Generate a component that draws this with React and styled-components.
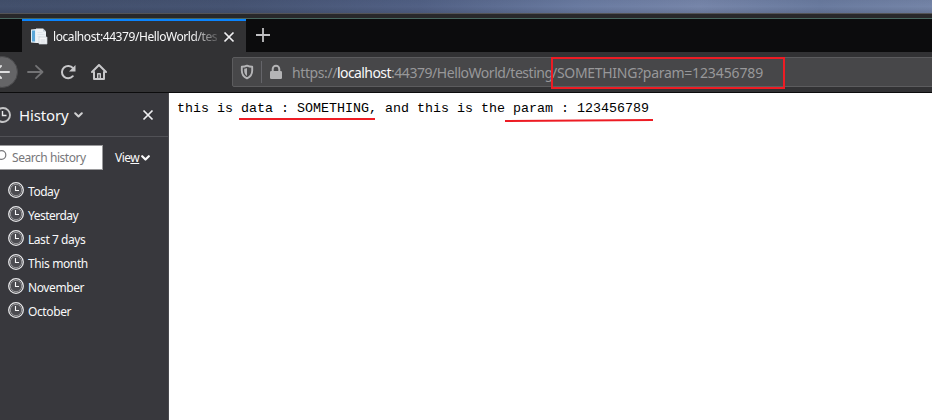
import React from "react";
import styled, { createGlobalStyle } from "styled-components";

const Global = createGlobalStyle`
  * { box-sizing: border-box; }
  body { margin: 0; overflow: hidden; background: #fff; font-family: "Noto Sans", "Open Sans", sans-serif; }
`;

const Window = styled.div`
  position: relative;
  display: flex;
  flex-direction: column;
  width: 932px;
  height: 420px;
  overflow: hidden;
`;
const Desktop = styled.div`
  flex: none;
  height: 13px;
  background:
    linear-gradient(180deg, rgba(20, 30, 50, 0.06), transparent 50%, rgba(20, 25, 40, 0.14)),
    linear-gradient(90deg, #43506c 0%, #465473 25%, #526185 45%, #6a7ba1 62%, #7786aa 75%, #6a7b9f 88%, #7585a8 100%);
`;
const Frame = styled.div`
  flex: none;
  height: 6px;
  background: #28282a;
  border-top: 1px solid #545456;
  border-bottom: 1px solid #48675f;
`;
const TabStrip = styled.div`
  flex: none;
  display: flex;
  height: 33px;
  padding-left: 22px;
  background: #0c0c0d;
`;
const Tab = styled.div`
  display: flex;
  align-items: center;
  width: 224px;
  border-top: 2px solid #0a84ff;
  padding: 0 11px 0 9px;
  background: #323234;
`;
const TabTitle = styled.div`
  flex: 1;
  margin-left: 5px;
  overflow: hidden;
  white-space: nowrap;
  font-size: 12px;
  line-height: 20px;
  letter-spacing: -0.42px;
  color: #f9f9fa;
  mask-image: linear-gradient(90deg, #000 138px, transparent 170px);
`;
const NewTab = styled.div`
  padding: 9px 0 0 10px;
  line-height: 0;
`;
const Toolbar = styled.div`
  flex: none;
  display: flex;
  align-items: center;
  height: 41px;
  background: #323234;
  border-bottom: 1px solid #0c0c0d;
`;
const BackButton = styled.div`
  display: flex;
  align-items: center;
  flex: none;
  width: 32px;
  height: 32px;
  margin-left: -14px;
  border-radius: 50%;
  border: 1px solid #4a4a4c;
  background: #656567;
  padding-left: 6px;
`;
const ToolIcon = styled.div`
  flex: none;
  width: 16px;
  height: 16px;
  margin-left: ${(p) => p.$gap}px;
  line-height: 0;
`;
const UrlBar = styled.div`
  display: flex;
  align-items: center;
  width: 712px;
  height: 30px;
  flex: none;
  margin-left: 125px;
  border: 1px solid #5c5c5e;
  border-radius: 2px 0 0 2px;
  background: #474749;
  line-height: 0;
  padding-left: 6px;
  & svg { flex: none; }
`;
const Divider = styled.div`
  width: 1px;
  height: 22px;
  margin: 0 6px 0 6px;
  background: #65656a;
`;
const Url = styled.div`
  display: flex;
  margin-left: 8px;
  padding-top: 2px;
  white-space: pre;
  font-size: 14px;
  line-height: 20px;
  color: #98989a;
`;
const UrlPart = styled.span`
  flex: none;
  width: ${(p) => p.$w}px;
  letter-spacing: ${(p) => p.$ls || 0}px;
  color: ${(p) => (p.$host ? "#f9f9fa" : "inherit")};
`;
const Body = styled.div`
  flex: 1;
  display: flex;
`;
const Sidebar = styled.aside`
  width: 169px;
  flex: none;
  background: #38383d;
  border-right: 1px solid #4a4a4f;
  color: #f9f9fa;
`;
const SidebarHeader = styled.div`
  display: flex;
  align-items: center;
  height: 44px;
  border-bottom: 1px solid #515156;
  margin-left: -5px;
`;
const SidebarTitle = styled.div`
  width: 51px;
  margin: 0 4px 0 8px;
  font-size: 15px;
  line-height: 22px;
  letter-spacing: -0.15px;
`;
const CloseSlot = styled.div`
  margin-left: 59px;
  line-height: 0;
`;
const SearchRow = styled.div`
  display: flex;
  align-items: center;
  height: 25px;
  margin-top: 8px;
`;
const SearchBox = styled.div`
  display: flex;
  align-items: center;
  width: 103px;
  height: 25px;
  overflow: hidden;
  border: 1px solid #9a9a9c;
  border-left: 0;
  background: #fff;
  color: #77777a;
  font-size: 12px;
  line-height: 18px;
  letter-spacing: -0.45px;
  white-space: nowrap;
  & svg { flex: none; margin: -3px 5px 0 -5px; }
`;
const View = styled.div`
  display: flex;
  align-items: center;
  margin-left: 12px;
  font-size: 12px;
  line-height: 18px;
  letter-spacing: -0.5px;
  & svg { margin-left: 2px; }
`;
const List = styled.ul`
  margin: 8px 0 0;
  padding: 0 0 0 8px;
  list-style: none;
`;
const Item = styled.li`
  display: flex;
  align-items: center;
  gap: 4px;
  height: 24px;
  font-size: 12px;
  letter-spacing: ${(p) => p.$ls}px;
  white-space: nowrap;
  & span { padding-top: 2px; }
`;
const Page = styled.pre`
  flex: 1;
  margin: 0;
  padding: 8px 8px;
  background: #fff;
  color: #000;
  font: 13.333px/15px "Liberation Mono", monospace;
`;
const Marks = styled.svg`
  position: absolute;
  left: 0;
  top: 0;
`;

const Cross = () => (
  <svg width="12" height="12" viewBox="0 0 12 12" fill="none" stroke="#f0f0f2" strokeWidth="1.7">
    <path d="M1.5 1.5l9 9M10.5 1.5l-9 9" />
  </svg>
);
const Chevron = ({ color = "#f9f9fa", w = 2 }) => (
  <svg width="9" height="8" viewBox="0 0 9 8" fill="none" stroke={color} strokeWidth={w} strokeLinecap="round" strokeLinejoin="round">
    <path d="M1.2 2.2l3.3 3.3 3.3-3.3" />
  </svg>
);
const Clock = () => (
  <svg width="16" height="16" viewBox="0 0 16 16" fill="none">
    <circle cx="8" cy="8" r="7.3" stroke="#e8e8ea" strokeWidth="1.3" />
    <circle cx="8" cy="8" r="5.7" fill="#4c4c51" stroke="#99999c" strokeWidth="1" />
    <path d="M7.5 4v4.5h3.5" stroke="#f9f9fa" strokeWidth="1.1" />
  </svg>
);
const HeaderClock = () => (
  <svg width="16" height="16" viewBox="0 0 16 16" fill="none" stroke="#c4c4c6">
    <circle cx="8" cy="8" r="7" strokeWidth="1.9" />
    <path d="M7.5 4v4.5h4" stroke="#e8e8ea" strokeWidth="1.4" />
  </svg>
);
const PageIcon = () => (
  <svg width="17" height="17" viewBox="0 0 17 17">
    <path d="M0 1.5L5 1v14l-5-.5z" fill="#e3edf4" />
    <path d="M1 2.5h3v11H1z" fill="#5aa6d8" />
    <path d="M5 .5h7l3 3V15H5z" fill="#edf1f5" />
    <path d="M12 .5v3h3z" fill="#c1ccd6" />
    <path d="M6.500 4.500h5M6.500 6.500h7M6.500 8.500h3" stroke="#dde4ea" />
    <path d="M8 9h8v7H8z" fill="#f5f6f8" stroke="#c7ced7" strokeWidth=".7" />
    <path d="M9.500 12h5M9.500 14h5" stroke="#d5dbe2" />
  </svg>
);
const Arrow = ({ flip, color, w = 2 }) => (
  <svg width="18" height="16" viewBox="0 0 18 16" fill="none" stroke={color} strokeWidth={w} strokeLinecap="round" strokeLinejoin="round">
    {flip ? <path d="M16 8H2M8 2L2 8l6 6" /> : <path d="M1 8h14.5M9 1.8L15.5 8 9 14.2" />}
  </svg>
);
const Reload = () => (
  <svg width="16" height="16" viewBox="0 0 16 16" fill="none" stroke="#c8c8ca" strokeWidth="2">
    <path d="M12.8 12.2A6.2 6.2 0 1 1 13 4.2" strokeLinecap="round" />
    <path d="M15.5 1v6.5H9z" fill="#c8c8ca" stroke="none" />
  </svg>
);
const Home = () => (
  <svg width="16" height="16" viewBox="0 0 16 16" fill="none" stroke="#c8c8ca" strokeWidth="2" strokeLinecap="round" strokeLinejoin="round">
    <path d="M1 8l7-7 7 7" />
    <path d="M3 8v7h10V8" />
    <path d="M6.7 14.5v-4.8h2.6v4.8" strokeWidth="1.4" />
  </svg>
);
const Shield = () => (
  <svg width="16" height="16" viewBox="0 0 16 16" fill="none">
    <path d="M8 1.6c1.8.8 3.6 1.1 5.2 1.1v3.8c0 4-1.900 6.400-5.200 7.900-3.300-1.500-5.200-3.900-5.200-7.900V2.700c1.600 0 3.400-.3 5.200-1.100z" stroke="#b4b4b6" strokeWidth="1.9" strokeLinejoin="round" />
    <path d="M8 4v8C6.100 10.800 5.200 9.200 5.200 6.500V4.700C6.300 4.600 7.200 4.400 8 4z" fill="#b4b4b6" />
  </svg>
);
const Lock = () => (
  <svg width="16" height="16" viewBox="0 0 16 16">
    <path d="M4.700 8V5a3.300 3.300 0 0 1 6.600 0v3" fill="none" stroke="#b4b4b6" strokeWidth="2" />
    <rect x="2" y="7" width="12" height="8" rx="1.300" fill="#b4b4b6" />
  </svg>
);

const periods = [
  ["Today", -0.45],
  ["Yesterday", -0.52],
  ["Last 7 days", -0.45],
  ["This month", -0.38],
  ["November", -0.4],
  ["October", -0.38],
];

export default function App() {
  return (
    <Window>
      <Global />
      <Desktop />
      <Frame />
      <TabStrip>
        <Tab>
          <PageIcon />
          <TabTitle>localhost:44379/HelloWorld/tes</TabTitle>
          <Cross />
        </Tab>
        <NewTab>
          <svg width="14" height="14" viewBox="0 0 14 14" stroke="#c0c0c2" strokeWidth="1.8">
            <path d="M7 0v14M0 7h14" />
          </svg>
        </NewTab>
      </TabStrip>
      <Toolbar>
        <BackButton><Arrow flip color="#dededf" /></BackButton>
        <ToolIcon $gap={9}><Arrow color="#737375" w={1.8} /></ToolIcon>
        <ToolIcon $gap={17}><Reload /></ToolIcon>
        <ToolIcon $gap={15}><Home /></ToolIcon>
        <UrlBar>
          <Shield />
          <Divider />
          <Lock />
          <Url>
            <UrlPart $w={45} $ls={-0.4}>https://</UrlPart>
            <UrlPart $w={54} $ls={-0.58} $host>localhost</UrlPart>
            <UrlPart $w={161} $ls={-0.45}>:44379/HelloWorld/testing</UrlPart>
            <UrlPart $w={140} $ls={-0.3}>/SOMETHING?param=</UrlPart>
            <UrlPart $w={72} $ls={-0.1}>123456789</UrlPart>
          </Url>
        </UrlBar>
      </Toolbar>
      <Body>
        <Sidebar>
          <SidebarHeader>
            <HeaderClock />
            <SidebarTitle>History</SidebarTitle>
            <Chevron color="#d0d0d2" />
            <CloseSlot><Cross /></CloseSlot>
          </SidebarHeader>
          <SearchRow>
            <SearchBox>
              <svg width="12" height="16" viewBox="0 0 12 16" fill="none" stroke="#77777a" strokeWidth="1.2">
                <circle cx="6.5" cy="7" r="4.3" />
              </svg>
              Search history
            </SearchBox>
            <View><span>Vie<u>w</u></span><Chevron w={2.2} /></View>
          </SearchRow>
          <List>
            {periods.map(([name, ls]) => (
              <Item key={name} $ls={ls}><Clock /><span>{name}</span></Item>
            ))}
          </List>
        </Sidebar>
        <Page>this is data : SOMETHING, and this is the param : 123456789</Page>
      </Body>
      <Marks width="932" height="420" fill="none" stroke="#ed1c24" strokeWidth="2">
        <rect x="552" y="58" width="232" height="30" />
        <path d="M239 119H375M505 121L653 120" />
      </Marks>
    </Window>
  );
}
